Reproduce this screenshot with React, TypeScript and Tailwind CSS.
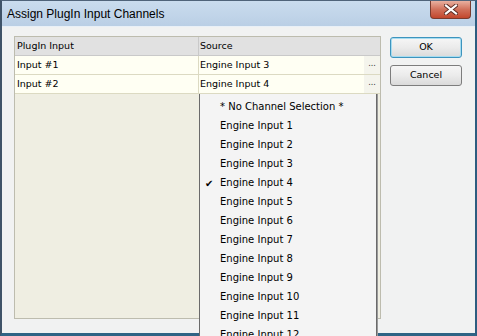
import React from 'react';

const channels = [
  '* No Channel Selection *',
  'Engine Input 1',
  'Engine Input 2',
  'Engine Input 3',
  'Engine Input 4',
  'Engine Input 5',
  'Engine Input 6',
  'Engine Input 7',
  'Engine Input 8',
  'Engine Input 9',
  'Engine Input 10',
  'Engine Input 11',
  'Engine Input 12',
];

const rows = [
  { input: 'Input #1', source: 'Engine Input 3' },
  { input: 'Input #2', source: 'Engine Input 4' },
];

function CloseButton() {
  return (
    <div className="absolute right-[4px] top-0 w-[41px] h-[18px] rounded-b-[4px] border border-t-0 border-[#7a3b2e] bg-gradient-to-b from-[#e8b0a0] via-[#d0705a] to-[#c2462c] flex items-center justify-center">
      <svg width="14" height="11" viewBox="0 0 14 11">
        <path d="M2 1.5 L12 9.5 M12 1.5 L2 9.5" stroke="#5a2a22" strokeWidth="4" strokeLinecap="square" />
        <path d="M2 1.5 L12 9.5 M12 1.5 L2 9.5" stroke="#ffffff" strokeWidth="2.2" strokeLinecap="square" />
      </svg>
    </div>
  );
}

function DialogButton({ label, isDefault }: { label: string; isDefault?: boolean }) {
  return (
    <button
      type="button"
      className={`w-[72px] h-[21px] rounded-[3px] border bg-gradient-to-b from-[#f6f6f6] via-[#ebebeb] to-[#dadada] text-[9.5px] text-black flex items-center justify-center ${
        isDefault ? 'border-[#3d94be] shadow-[inset_0_0_0_1px_#a6dcf0]' : 'border-[#7d7d7d]'
      }`}
    >
      {label}
    </button>
  );
}

export default function App() {
  return (
    <div className="relative w-[477px] h-[336px] overflow-hidden bg-white font-['DejaVu_Sans',sans-serif] text-black">
      <div className="flex flex-col w-[477px] h-[336px] border-t border-l-2 border-r-2 border-b-[3px] border-t-[#50647a] border-l-[#3f5368] border-r-[#2d5d80] border-b-[#2f6485] bg-[#f1f2f2]">
        {/* title bar */}
        <div className="relative h-[26px] shrink-0 bg-gradient-to-b from-[#cadcee] to-[#bacfe5] border-b border-[#e9f0f7] flex items-center pl-[5px]">
          <span className="font-['Liberation_Sans',sans-serif] text-[12px] leading-none pt-[1px]">Assign PlugIn Input Channels</span>
          <CloseButton />
        </div>

        {/* client */}
        <div className="flex flex-1 pt-[9px] pl-[12px]">
          <div className="w-[367px] h-[283px] bg-[#efeee2] border border-[#bdbcae] flex flex-col">
            <div className="flex h-[19px] bg-[#e1e1e1] border-b border-[#c9c9c9] text-[9.5px]">
              <div className="w-[184px] border-r border-[#c9c9c9] pl-[2px] flex items-center">PlugIn Input</div>
              <div className="flex-1 pl-[1px] flex items-center">Source</div>
            </div>
            {rows.map(r => (
              <div key={r.input} className="flex h-[19px] bg-[#fffff3] border-b border-[#dcdac2] text-[9.5px]">
                <div className="w-[184px] border-r border-[#dcdac2] pl-[2px] flex items-center">{r.input}</div>
                <div className="flex-1 pl-[1px] flex items-center">{r.source}</div>
                <div className="w-[16px] bg-[#f4f4ec] flex items-center justify-center text-[8px] text-[#333] pb-[2px]">...</div>
              </div>
            ))}
          </div>

          <div className="ml-[9px] pt-[1px] flex flex-col gap-[7px]">
            <DialogButton label="OK" isDefault />
            <DialogButton label="Cancel" />
          </div>
        </div>
      </div>

      {/* open dropdown list */}
      <div className="absolute left-[199px] top-[94px] w-[178px] h-[260px] bg-[#f4f4f4] border-l border-r border-[#6a6a6a] shadow-[1px_0_0_#9a9a9a] pt-[3px]">
        {channels.map(c => (
          <div key={c} className="relative h-[19px] flex items-center pl-[20px] text-[10px]">
            {c === 'Engine Input 4' && (
              <span className="absolute left-[5px] top-[3px] text-[10px]">✔</span>
            )}
            {c}
          </div>
        ))}
      </div>
    </div>
  );
}
